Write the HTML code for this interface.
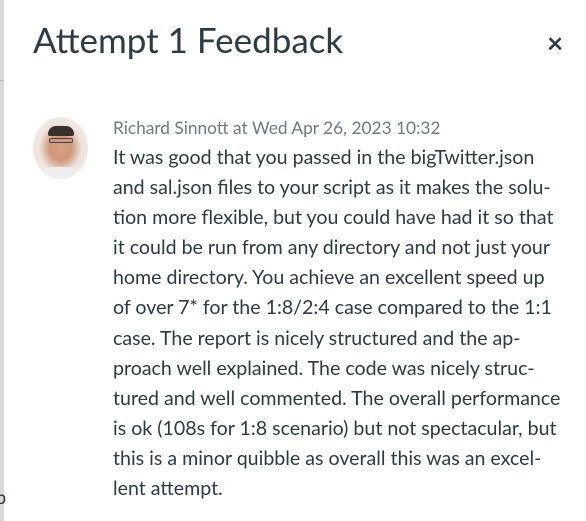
<!DOCTYPE html>
<html><head><style>
html,body{margin:0;padding:0;background:#fff;width:586px;height:521px;overflow:hidden;font-family:"Lato","Liberation Sans",sans-serif;}
.strip{position:absolute;left:0;top:0;width:4px;height:521px;background:#d9d9d9;}
.strip2{position:absolute;left:0;top:80px;width:4px;height:1px;background:#b5b5b5;}
h1{position:absolute;left:33px;top:19px;margin:0;font-weight:400;font-size:35px;color:#2d3b45;}
.x{position:absolute;left:547px;top:25px;font-size:28px;font-weight:bold;color:#2d3b45;}
.av{position:absolute;left:33px;top:117px;width:55px;height:62px;border-radius:50%;background:radial-gradient(ellipse at 50% 50%,#d8a184 0,#cf9678 28%,#eee4de 55%,#f3efed 100%);overflow:hidden;}
.hair{position:absolute;left:15px;top:9px;width:26px;height:10px;border-radius:12px 12px 3px 3px;background:#3a302c;}
.gl{position:absolute;left:16px;top:21px;width:24px;height:5px;border:1px solid #444;border-radius:2px;box-sizing:border-box;}
.shirt{position:absolute;left:8px;top:50px;width:40px;height:14px;background:#eeeeee;border-radius:10px 10px 0 0;}
.name{position:absolute;left:113px;top:117px;font-size:17.3px;color:#6f7b84;}
.body{position:absolute;left:113px;top:143px;font-size:19.6px;line-height:30.1px;color:#2d3b45;white-space:nowrap;}
.p{position:absolute;left:-4px;top:486px;font-size:18px;color:#2d3b45;}
</style></head><body>
<div class="strip"></div><div class="strip2"></div>
<div class="p">p</div>
<h1>Attempt 1 Feedback</h1>
<div class="x">×</div>
<div class="av"><div class="hair"></div><div class="gl"></div><div class="shirt"></div></div>
<div class="name">Richard Sinnott at Wed Apr 26, 2023 10:32</div>
<div class="body">It was good that you passed in the bigTwitter.json<br>and sal.json files to your script as it makes the solu-<br>tion more flexible, but you could have had it so that<br>it could be run from any directory and not just your<br>home directory. You achieve an excellent speed up<br>of over 7* for the 1:8/2:4 case compared to the 1:1<br>case. The report is nicely structured and the ap-<br>proach well explained. The code was nicely struc-<br>tured and well commented. The overall performance<br>is ok (108s for 1:8 scenario) but not spectacular, but<br>this is a minor quibble as overall this was an excel-<br>lent attempt.</div>
</body></html>
